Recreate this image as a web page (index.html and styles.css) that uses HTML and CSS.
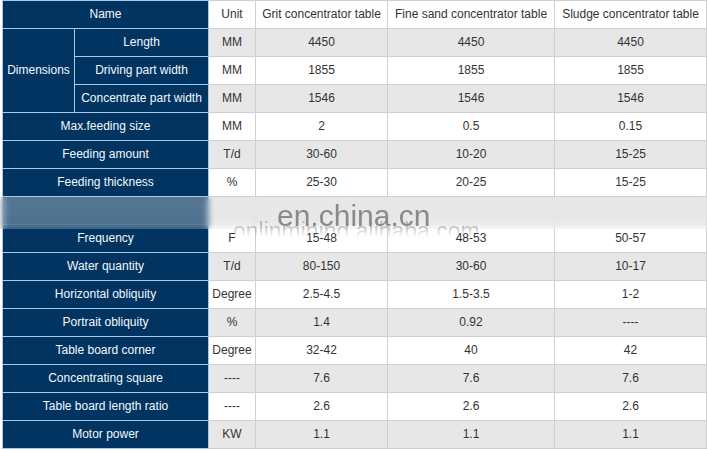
FILE: index.html
```html
<!DOCTYPE html>
<html>
<head>
<meta charset="utf-8">
<link rel="stylesheet" href="styles.css">
</head>
<body>
<div class="sheet">
  <table class="spec">
    <colgroup>
      <col class="c-dim"><col class="c-name"><col class="c-unit"><col class="c-grit"><col class="c-fine"><col class="c-sludge">
    </colgroup>
    <tbody>
      <tr class="odd">
        <th colspan="2">Name</th><td>Unit</td><td>Grit concentrator table</td><td>Fine sand concentrator table</td><td>Sludge concentrator table</td>
      </tr>
      <tr class="even">
        <th rowspan="3">Dimensions</th><th>Length</th><td>MM</td><td>4450</td><td>4450</td><td>4450</td>
      </tr>
      <tr class="odd">
        <th>Driving part width</th><td>MM</td><td>1855</td><td>1855</td><td>1855</td>
      </tr>
      <tr class="even">
        <th>Concentrate part width</th><td>MM</td><td>1546</td><td>1546</td><td>1546</td>
      </tr>
      <tr class="odd">
        <th colspan="2">Max.feeding size</th><td>MM</td><td>2</td><td>0.5</td><td>0.15</td>
      </tr>
      <tr class="even">
        <th colspan="2">Feeding amount</th><td>T/d</td><td>30-60</td><td>10-20</td><td>15-25</td>
      </tr>
      <tr class="odd">
        <th colspan="2">Feeding thickness</th><td>%</td><td>25-30</td><td>20-25</td><td>15-25</td>
      </tr>
      <tr class="even hidden-row">
        <th colspan="2"></th><td></td><td></td><td></td><td></td>
      </tr>
      <tr class="odd">
        <th colspan="2">Frequency</th><td>F</td><td>15-48</td><td>48-53</td><td>50-57</td>
      </tr>
      <tr class="even">
        <th colspan="2">Water quantity</th><td>T/d</td><td>80-150</td><td>30-60</td><td>10-17</td>
      </tr>
      <tr class="odd">
        <th colspan="2">Horizontal obliquity</th><td>Degree</td><td>2.5-4.5</td><td>1.5-3.5</td><td>1-2</td>
      </tr>
      <tr class="even">
        <th colspan="2">Portrait obliquity</th><td>%</td><td>1.4</td><td>0.92</td><td>----</td>
      </tr>
      <tr class="odd">
        <th colspan="2">Table board corner</th><td>Degree</td><td>32-42</td><td>40</td><td>42</td>
      </tr>
      <tr class="even">
        <th colspan="2">Concentrating square</th><td>----</td><td>7.6</td><td>7.6</td><td>7.6</td>
      </tr>
      <tr class="odd">
        <th colspan="2">Table board length ratio</th><td>----</td><td>2.6</td><td>2.6</td><td>2.6</td>
      </tr>
      <tr class="even">
        <th colspan="2">Motor power</th><td>KW</td><td>1.1</td><td>1.1</td><td>1.1</td>
      </tr>
    </tbody>
  </table>
  <div class="wm-band"></div>
  <div class="wm-main">en.china.cn</div>
  <div class="wm-sub">onlinmining.alibaba.com</div>
</div>
</body>
</html>
```

FILE: styles.css
```css
html, body {
  margin: 0;
  padding: 0;
  background: #ffffff;
}

.sheet {
  position: relative;
  width: 707px;
  height: 450px;
  overflow: hidden;
  font-family: "Liberation Sans", Arial, sans-serif;
  font-size: 12px;
}

.spec {
  margin-left: 2px;
  width: 704px;
  table-layout: fixed;
  border-collapse: collapse;
}

.c-dim { width: 72px; }
.c-name { width: 134px; }
.c-unit { width: 47px; }
.c-grit { width: 132px; }
.c-fine { width: 167px; }
.c-sludge { width: 152px; }

.spec tr {
  height: 28px;
}

.spec th,
.spec td {
  padding: 0 0 2px 0;
  text-align: center;
  vertical-align: middle;
  white-space: nowrap;
  font-weight: normal;
  line-height: 14px;
}

.spec th {
  background: #013461;
  color: #f4f8fc;
  border: 1px solid #a9c9e8;
}

.spec td {
  color: #333333;
  border: 1px solid #cfcfcf;
}

.spec tr.even td {
  background: #e7e7e7;
}

.spec tr.odd td {
  background: #ffffff;
}

.wm-band {
  position: absolute;
  left: 0;
  top: 197px;
  width: 707px;
  height: 32px;
  background: linear-gradient(to bottom, rgba(234, 234, 234, 0.36) 0%, rgba(234, 234, 234, 0.36) 55%, rgba(240, 240, 240, 0.22) 100%);
  backdrop-filter: blur(3px);
}

.wm-main {
  position: absolute;
  left: 277px;
  top: 201px;
  font-size: 30px;
  line-height: 30px;
  color: #8a8a8a;
  white-space: nowrap;
}

.wm-sub {
  position: absolute;
  left: 233px;
  top: 220px;
  font-size: 23px;
  line-height: 23px;
  color: rgba(140, 140, 140, 0.5);
  white-space: nowrap;
  filter: blur(0.4px);
  -webkit-mask-image: linear-gradient(to bottom, #000 30%, transparent 75%);
  mask-image: linear-gradient(to bottom, #000 30%, transparent 75%);
}
```
